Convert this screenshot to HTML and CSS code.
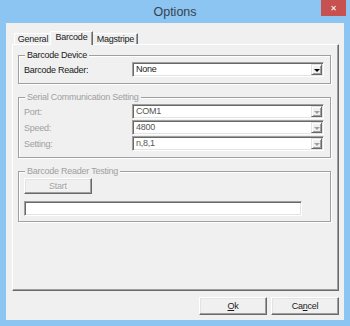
FILE: index.html
```html
<!DOCTYPE html>
<html lang="en">
<head>
    <meta charset="UTF-8">
    <meta name="viewport" content="width=device-width, initial-scale=1.0">
    <title>Options</title>
    <link rel="stylesheet" href="styles.css">
</head>
<body>
    <div class="window">
        <div class="titlebar">
            <span class="title">Options</span>
            <div class="close">&#x2715;</div>
        </div>
        <div class="client">
            <div class="tabs">
                <div class="tab tab-general">General</div>
                <div class="tab tab-active">Barcode</div>
                <div class="tab tab-magstripe">Magstripe</div>
            </div>
            <div class="panel">
                <div class="group">
                    <span class="legend">Barcode Device</span>
                    <div class="row">
                        <span class="label">Barcode Reader:</span>
                        <div class="combo">
                            <span class="combo-value">None</span>
                            <span class="combo-btn"><i class="arrow"></i></span>
                        </div>
                    </div>
                </div>
                <div class="group group-serial disabled">
                    <span class="legend">Serial Communication Setting</span>
                    <div class="row">
                        <span class="label">Port:</span>
                        <div class="combo">
                            <span class="combo-value">COM1</span>
                            <span class="combo-btn"><i class="arrow"></i></span>
                        </div>
                    </div>
                    <div class="row">
                        <span class="label">Speed:</span>
                        <div class="combo">
                            <span class="combo-value">4800</span>
                            <span class="combo-btn"><i class="arrow"></i></span>
                        </div>
                    </div>
                    <div class="row">
                        <span class="label">Setting:</span>
                        <div class="combo">
                            <span class="combo-value">n,8,1</span>
                            <span class="combo-btn"><i class="arrow"></i></span>
                        </div>
                    </div>
                </div>
                <div class="group group-test disabled">
                    <span class="legend">Barcode Reader Testing</span>
                    <div class="btn btn-start">Start</div>
                    <div class="textbox"></div>
                </div>
            </div>
            <div class="buttons">
                <div class="btn btn-dialog"><u>O</u>k</div>
                <div class="btn btn-dialog">Ca<u>n</u>cel</div>
            </div>
        </div>
    </div>
</body>
</html>
```

FILE: styles.css
```css
body {
    margin: 0;
    background-color: #8cc4f2;
    font-family: "Liberation Sans", Arial, sans-serif;
    font-size: 9px;
    letter-spacing: -0.25px;
    color: #1a1a1a;
}
.window {
    width: 350px;
    height: 326px;
    display: flex;
    flex-direction: column;
    overflow: hidden;
}
.titlebar {
    position: relative;
    height: 23px;
    display: flex;
    align-items: center;
    justify-content: center;
}
.title {
    font-family: "Liberation Sans", Arial, sans-serif;
    font-size: 12.5px;
    letter-spacing: 0;
    color: #34434f;
    padding-top: 1px;
}
.close {
    position: absolute;
    top: 0;
    right: 4px;
    width: 25px;
    height: 16px;
    background-color: #c75050;
    color: #fff;
    display: flex;
    align-items: center;
    justify-content: center;
    font-family: "DejaVu Sans", sans-serif;
    font-size: 8px;
    font-weight: bold;
}
.client {
    flex: 1;
    margin: 0 6px 6px;
    padding: 8px 5px 0 6px;
    background-color: #f0f0f0;
    display: flex;
    flex-direction: column;
}
.tabs {
    display: flex;
    align-items: flex-end;
    height: 13px;
    padding-left: 2px;
    position: relative;
    z-index: 1;
}
.tab {
    box-sizing: border-box;
    height: 11px;
    line-height: 10px;
    text-align: center;
    background-color: #f0f0f0;
    border-top: 1px solid #fff;
    border-left: 1px solid #fff;
    border-right: 1px solid #696969;
    box-shadow: inset -1px 0 #a0a0a0;
}
.tab-general { width: 38px; }
.tab-magstripe { width: 47px; padding-left: 2px; }
.tab-active {
    position: relative;
    z-index: 2;
    width: 43px;
    height: 14px;
    margin: 0 -2px -1px;
    line-height: 11px;
}
.panel {
    box-sizing: border-box;
    height: 247px;
    padding: 10px 7px 0 5px;
    border-top: 1px solid #fff;
    border-left: 1px solid #fff;
    border-right: 1px solid #696969;
    border-bottom: 1px solid #696969;
    box-shadow: inset -1px -1px #a0a0a0;
}
.group {
    padding: 0 5px 6px;
    border: 1px solid #a0a0a0;
    box-shadow: inset 1px 1px #fff, 1px 1px #fff;
}
.group-serial,
.group-test {
    margin-top: 13px;
}
.group-test {
    padding-bottom: 5px;
}
.legend {
    display: block;
    width: max-content;
    margin: -6px 0 0 1px;
    padding: 0 2px;
    line-height: 11px;
    background-color: #f0f0f0;
}
.disabled,
.disabled .label {
    color: #a0a0a0;
}
.row {
    display: flex;
    align-items: center;
    height: 15px;
    margin-top: 1px;
}
.label {
    width: 108px;
}
.combo {
    box-sizing: border-box;
    width: 192px;
    height: 15px;
    padding: 1px;
    display: flex;
    background-color: #fff;
    border: 1px solid;
    border-color: #a0a0a0 #fff #fff #a0a0a0;
    box-shadow: inset 1px 1px #696969, inset -1px -1px #e3e3e3;
}
.combo-value {
    flex: 1;
    padding-left: 2px;
    line-height: 11px;
}
.disabled .combo-value {
    color: #555;
}
.combo-btn {
    box-sizing: border-box;
    width: 11px;
    height: 11px;
    display: flex;
    align-items: center;
    justify-content: center;
    background-color: #f0f0f0;
    border: 1px solid;
    border-color: #e3e3e3 #696969 #696969 #e3e3e3;
    box-shadow: inset 1px 1px #fff, inset -1px -1px #a0a0a0;
}
.arrow {
    width: 0;
    height: 0;
    border-left: 3px solid transparent;
    border-right: 3px solid transparent;
    border-top: 3px solid #000;
    margin-top: 1px;
}
.disabled .arrow {
    border-top-color: #a0a0a0;
}
.btn {
    box-sizing: border-box;
    display: flex;
    align-items: center;
    justify-content: center;
    background-color: #f0f0f0;
    border: 1px solid;
    border-color: #fff #696969 #696969 #fff;
    box-shadow: inset -1px -1px #a0a0a0, inset 1px 1px #e3e3e3;
}
.btn-start {
    width: 68px;
    height: 16px;
    margin-top: 1px;
    color: #a0a0a0;
    text-shadow: 1px 1px #fff;
}
.textbox {
    box-sizing: border-box;
    width: 278px;
    height: 15px;
    margin-top: 7px;
    background-color: #fff;
    border: 1px solid;
    border-color: #a0a0a0 #fff #fff #a0a0a0;
    box-shadow: inset 1px 1px #696969, inset -1px -1px #e3e3e3;
}
.buttons {
    display: flex;
    justify-content: flex-end;
    gap: 4px;
    margin-top: 6px;
}
.btn-dialog {
    width: 68px;
    height: 18px;
}
```
